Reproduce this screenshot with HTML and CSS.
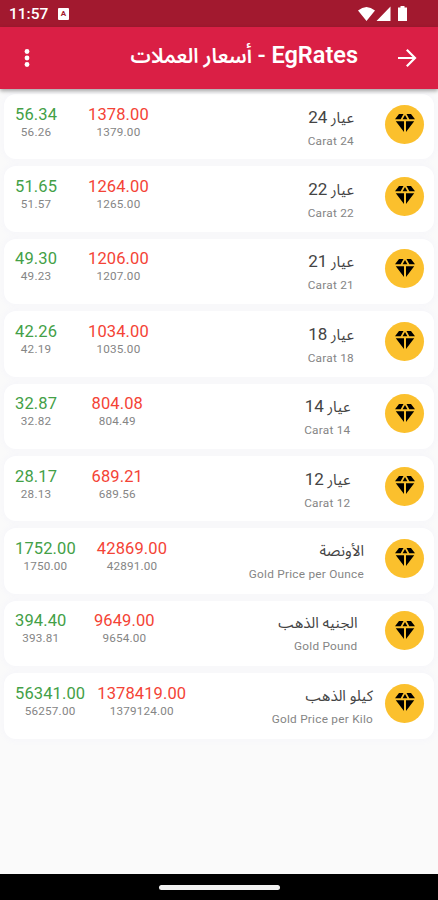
FILE: index.html
```
<!DOCTYPE html>
<html lang="ar">
<head>
  <meta charset="UTF-8">
  <meta name="viewport" content="width=device-width, initial-scale=1.0">
  <title>EgRates</title>
  <link rel="stylesheet" href="styles.css">
</head>
<body>
  <svg width="0" height="0" class="defs">
    <symbol id="gem" viewBox="0 0 20 18">
      <path d="M4 0h4.500L5.700 5.200H0zM11.500 0H16l4 5.200h-5.700zM10 1l2.400 4.200H7.600zM.8 7.300H9V18zM11 7.300h8.200L11 18z"/>
    </symbol>
  </svg>

  <div class="status">
    <span class="time">11:57</span>
    <span class="badge">A</span>
    <svg class="signals" width="50" height="16" viewBox="0 0 50 16">
      <path d="M0 4.500Q8.500-2.500 17 4.500L8.500 15zM32.500.500V15H18.500zM42.500 1.500V0h4v1.500H49V15h-9V1.500z"/>
    </svg>
  </div>

  <header class="appbar">
    <svg class="menu" width="6" height="20" viewBox="0 0 6 20">
      <circle cx="3" cy="3.500" r="2.400"/><circle cx="3" cy="10" r="2.400"/><circle cx="3" cy="16.500" r="2.400"/>
    </svg>
    <h1 dir="rtl"><span class="en-title">EgRates</span> - <span class="ar-title">أسعار العملات</span></h1>
    <svg class="arrow" width="20" height="20" viewBox="0 0 20 20">
      <path d="M1 10h17M9.800 1.800L18 10l-8.200 8.200"/>
    </svg>
  </header>

  <main class="list">
    <div class="card">
      <div class="price up"><b>56.34</b><small>56.26</small></div>
      <div class="price down"><b>1378.00</b><small>1379.00</small></div>
      <div class="name"><h2 dir="rtl">عيار <span>24</span></h2><p>Carat 24</p></div>
      <div class="icon"><svg width="20" height="18"><use href="#gem"/></svg></div>
    </div>
    <div class="card">
      <div class="price up"><b>51.65</b><small>51.57</small></div>
      <div class="price down"><b>1264.00</b><small>1265.00</small></div>
      <div class="name"><h2 dir="rtl">عيار <span>22</span></h2><p>Carat 22</p></div>
      <div class="icon"><svg width="20" height="18"><use href="#gem"/></svg></div>
    </div>
    <div class="card">
      <div class="price up"><b>49.30</b><small>49.23</small></div>
      <div class="price down"><b>1206.00</b><small>1207.00</small></div>
      <div class="name"><h2 dir="rtl">عيار <span>21</span></h2><p>Carat 21</p></div>
      <div class="icon"><svg width="20" height="18"><use href="#gem"/></svg></div>
    </div>
    <div class="card">
      <div class="price up"><b>42.26</b><small>42.19</small></div>
      <div class="price down"><b>1034.00</b><small>1035.00</small></div>
      <div class="name"><h2 dir="rtl">عيار <span>18</span></h2><p>Carat 18</p></div>
      <div class="icon"><svg width="20" height="18"><use href="#gem"/></svg></div>
    </div>
    <div class="card wide">
      <div class="price up"><b>32.87</b><small>32.82</small></div>
      <div class="price down"><b>804.08</b><small>804.49</small></div>
      <div class="name"><h2 dir="rtl">عيار <span>14</span></h2><p>Carat 14</p></div>
      <div class="icon"><svg width="20" height="18"><use href="#gem"/></svg></div>
    </div>
    <div class="card wide">
      <div class="price up"><b>28.17</b><small>28.13</small></div>
      <div class="price down"><b>689.21</b><small>689.56</small></div>
      <div class="name"><h2 dir="rtl">عيار <span>12</span></h2><p>Carat 12</p></div>
      <div class="icon"><svg width="20" height="18"><use href="#gem"/></svg></div>
    </div>
    <div class="card ounce">
      <div class="price up"><b>1752.00</b><small>1750.00</small></div>
      <div class="price down"><b>42869.00</b><small>42891.00</small></div>
      <div class="name"><h2 dir="rtl">الأونصة</h2><p>Gold Price per Ounce</p></div>
      <div class="icon"><svg width="20" height="18"><use href="#gem"/></svg></div>
    </div>
    <div class="card pound">
      <div class="price up"><b>394.40</b><small>393.81</small></div>
      <div class="price down"><b>9649.00</b><small>9654.00</small></div>
      <div class="name"><h2 dir="rtl">الجنيه الذهب</h2><p>Gold Pound</p></div>
      <div class="icon"><svg width="20" height="18"><use href="#gem"/></svg></div>
    </div>
    <div class="card kilo">
      <div class="price up"><b>56341.00</b><small>56257.00</small></div>
      <div class="price down"><b>1378419.00</b><small>1379124.00</small></div>
      <div class="name"><h2 dir="rtl">كيلو الذهب</h2><p>Gold Price per Kilo</p></div>
      <div class="icon"><svg width="20" height="18"><use href="#gem"/></svg></div>
    </div>
  </main>

  <footer class="navbar"><div class="handle"></div></footer>
</body>
</html>
```
FILE: styles.css
```
* {
  box-sizing: border-box;
}
body {
  margin: 0;
  height: 900px;
  display: flex;
  flex-direction: column;
  overflow: hidden;
  background: #fafafa;
  font-family: Roboto, "Noto Sans Arabic", "DejaVu Sans", sans-serif;
}
.defs {
  position: absolute;
}
.status {
  height: 27px;
  padding: 1px 30px 0 9px;
  display: flex;
  align-items: center;
  background: #a2192f;
  color: #fff;
}
.time {
  width: 39px;
  font-size: 15.5px;
  font-weight: 500;
}
.badge {
  width: 11px;
  height: 12px;
  margin-left: 10px;
  border-radius: 1px;
  background: #fff;
  color: #a2192f;
  font-size: 8px;
  font-weight: 700;
  line-height: 12px;
  text-align: center;
}
.signals {
  margin-left: auto;
  fill: #fff;
}
.appbar {
  position: relative;
  height: 62px;
  padding: 0 21px 0 24px;
  display: flex;
  align-items: center;
  background: #da1f45;
  color: #fff;
  box-shadow: 0 2px 4px rgba(0, 0, 0, 0.35);
}
.menu {
  fill: #fff;
}
.appbar h1 {
  margin: 0 39px 5px auto;
  font-size: 22.5px;
  font-weight: 600;
  line-height: 30px;
  white-space: nowrap;
}
.en-title {
  font-size: 23.5px;
}
.ar-title {
  font-size: 20.3px;
}
.arrow {
  fill: none;
  stroke: #fff;
  stroke-width: 2.2;
}
.list {
  flex: 1;
  padding: 5px 4px 0;
  display: flex;
  flex-direction: column;
  gap: 7px;
}
.card {
  --gap: 31px;
  height: 65.4px;
  padding: 10.6px 10px 0 11px;
  display: flex;
  align-items: flex-start;
  background: #fff;
  border-radius: 12px;
  box-shadow: 0 0 5px 3px #f7f7fa;
}
.wide {
  --gap: 34.5px;
}
.ounce {
  --gap: 21px;
}
.pound {
  --gap: 27.5px;
}
.kilo {
  --gap: 12px;
}
.price {
  display: flex;
  flex-direction: column;
  align-items: center;
  margin-right: var(--gap);
}
.price b {
  font-size: 16.5px;
  font-weight: 400;
  line-height: 20px;
  letter-spacing: 0.12px;
}
.price small {
  color: #858585;
  font-size: 11.7px;
  line-height: 15px;
  letter-spacing: 0.2px;
}
.up b {
  color: #43a047;
}
.down b {
  color: #f44336;
}
.name {
  margin: 1px var(--gap) 0 auto;
  text-align: right;
}
.name h2 {
  margin: 0;
  color: #444;
  font-size: 15px;
  font-weight: 400;
  line-height: 22px;
  white-space: nowrap;
}
.name h2 span {
  font-size: 17px;
}
.name p {
  margin: 5px 0 0;
  color: #858585;
  font-size: 11.8px;
  line-height: 14px;
  letter-spacing: 0.25px;
}
.icon {
  width: 39px;
  height: 39px;
  display: flex;
  align-items: center;
  justify-content: center;
  border-radius: 50%;
  background: #fbc02d;
}
.icon svg {
  margin-bottom: 2px;
}
.navbar {
  height: 26px;
  display: flex;
  align-items: center;
  justify-content: center;
  background: #000;
}
.handle {
  width: 121px;
  height: 5px;
  border-radius: 3px;
  background: #f2f2f2;
}
```
